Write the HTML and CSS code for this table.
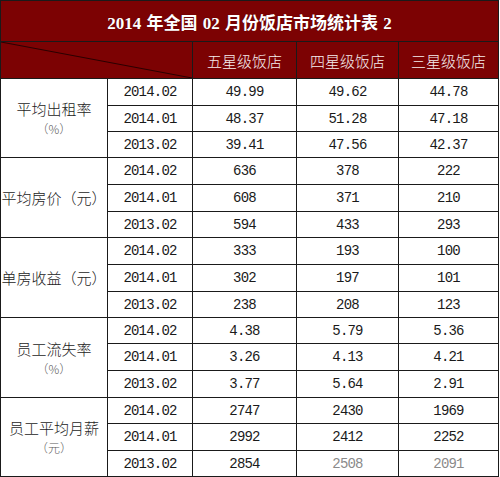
FILE: index.html
```html
<!DOCTYPE html>
<html lang="zh">
<head>
<meta charset="utf-8">
<title>2014 年全国 02 月份饭店市场统计表 2</title>
<link rel="stylesheet" href="styles.css">
</head>
<body>
<div class="sheet">
  <div class="title"><span class="title-text">2014 年全国 02 月份饭店市场统计表 2</span></div>
  <div class="corner"><svg class="diag" viewBox="0 0 100 100" preserveAspectRatio="none"><line x1="0" y1="0" x2="100" y2="100" vector-effect="non-scaling-stroke"/></svg></div>
  <div class="hd">五星级饭店</div>
  <div class="hd">四星级饭店</div>
  <div class="hd">三星级饭店</div>

  <div class="label"><span class="main">平均出租率</span><span class="sub">（%）</span></div>
  <div class="num">2014.02</div><div class="num">49.99</div><div class="num">49.62</div><div class="num">44.78</div>
  <div class="num">2014.01</div><div class="num">48.37</div><div class="num">51.28</div><div class="num">47.18</div>
  <div class="num">2013.02</div><div class="num">39.41</div><div class="num">47.56</div><div class="num">42.37</div>

  <div class="label"><span class="main">平均房价（元）</span></div>
  <div class="num">2014.02</div><div class="num">636</div><div class="num">378</div><div class="num">222</div>
  <div class="num">2014.01</div><div class="num">608</div><div class="num">371</div><div class="num">210</div>
  <div class="num">2013.02</div><div class="num">594</div><div class="num">433</div><div class="num">293</div>

  <div class="label"><span class="main">单房收益（元）</span></div>
  <div class="num">2014.02</div><div class="num">333</div><div class="num">193</div><div class="num">100</div>
  <div class="num">2014.01</div><div class="num">302</div><div class="num">197</div><div class="num">101</div>
  <div class="num">2013.02</div><div class="num">238</div><div class="num">208</div><div class="num">123</div>

  <div class="label"><span class="main">员工流失率</span><span class="sub">（%）</span></div>
  <div class="num">2014.02</div><div class="num">4.38</div><div class="num">5.79</div><div class="num">5.36</div>
  <div class="num">2014.01</div><div class="num">3.26</div><div class="num">4.13</div><div class="num">4.21</div>
  <div class="num">2013.02</div><div class="num">3.77</div><div class="num">5.64</div><div class="num">2.91</div>

  <div class="label"><span class="main">员工平均月薪</span><span class="sub">（元）</span></div>
  <div class="num">2014.02</div><div class="num">2747</div><div class="num">2430</div><div class="num">1969</div>
  <div class="num">2014.01</div><div class="num">2992</div><div class="num">2412</div><div class="num">2252</div>
  <div class="num">2013.02</div><div class="num">2854</div><div class="num faded">2508</div><div class="num faded">2091</div>
</div>
</body>
</html>
```
FILE: styles.css
```css
html, body {
  margin: 0;
  padding: 0;
  background: #ffffff;
}

.sheet {
  width: 497px;
  padding: 1px;
  display: grid;
  grid-template-columns: 106px 84px 103px 101px 99px;
  grid-template-rows: 40px 36px 26px 25px 25px 26px 26px 25px 26px 26px 25px 25px 26px 26px 25px 26px 25px;
  gap: 1px;
  background: #1a1a1a;
  font-family: "Noto Sans CJK SC", sans-serif;
}

.title {
  grid-column: 1 / -1;
  background: #7c0203;
  color: #ffffff;
  display: flex;
  align-items: center;
  justify-content: center;
  padding-top: 1px;
}

.title-text {
  font-family: "Liberation Serif", "Noto Sans CJK SC", serif;
  font-weight: bold;
  font-size: 17px;
  white-space: pre;
  word-spacing: 1px;
  text-shadow: 0 0 1px rgba(0, 0, 0, 0.4);
}

.corner {
  grid-column: span 2;
  background: #7c0203;
}

.diag {
  display: block;
  width: 100%;
  height: 100%;
}

.diag line {
  stroke: #2a0000;
  stroke-width: 1;
}

.hd {
  background: #7c0203;
  color: #f6eeee;
  font-size: 15px;
  font-weight: 300;
  display: flex;
  align-items: center;
  justify-content: center;
  padding-top: 1px;
}

.label {
  grid-row: span 3;
  background: #ffffff;
  color: #1c1c1c;
  display: flex;
  flex-direction: column;
  align-items: center;
  justify-content: center;
}

.label .main {
  font-size: 15px;
  font-weight: 300;
  line-height: 22px;
  white-space: nowrap;
}

.label .sub {
  font-size: 12px;
  font-weight: 300;
  line-height: 18px;
  color: #5a5a5a;
}

.num {
  background: #ffffff;
  color: #1a1a1a;
  font-family: "Liberation Mono", monospace;
  font-size: 14px;
  letter-spacing: -0.8px;
  display: flex;
  align-items: center;
  justify-content: center;
}

.num.faded {
  color: #8a8a8a;
}
```
